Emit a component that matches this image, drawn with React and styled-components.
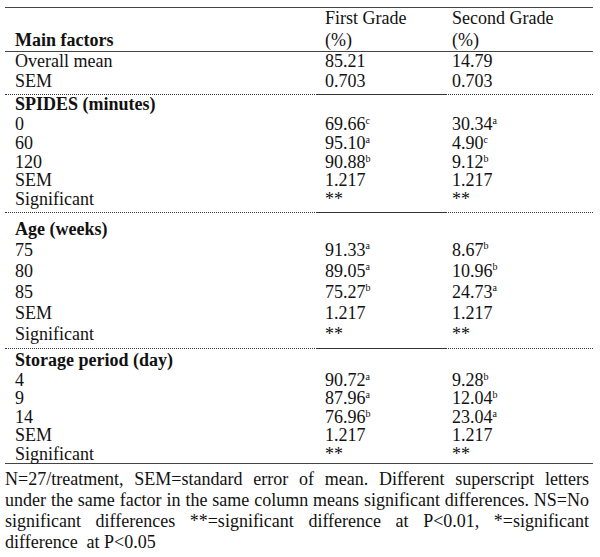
import React from 'react';
import styled, { createGlobalStyle } from 'styled-components';

const GlobalStyle = createGlobalStyle`
  body {
    margin: 0;
    background: #fff;
    color: #111;
    font-family: "Liberation Serif", "Times New Roman", serif;
  }
`;

const Page = styled.div`
  width: 588px;
  padding: 7px 0 0 5px;
`;

const Table = styled.table`
  width: 588px;
  border-collapse: collapse;
  font-size: 18px;
  border-top: 1.5px solid #444;
  border-bottom: 1.5px solid #444;
  table-layout: fixed;
`;

const HeadCell = styled.th`
  text-align: left;
  vertical-align: bottom;
  font-weight: ${p => (p.bold ? 700 : 400)};
  padding: 0 0 0 ${p => p.pad}px;
  line-height: 21.5px;
  border-bottom: 1.5px solid #444;
`;

const Cell = styled.td`
  padding: 0 0 ${p => (p.rule ? 3 : 0)}px ${p => p.pad}px;
  line-height: ${p => p.h}px;
  vertical-align: top;
  white-space: nowrap;
  border-bottom: ${p => (p.rule ? (p.solid ? '1.5px solid #333' : '1.5px dotted #333') : 'none')};
`;

const TitleCell = styled.td`
  padding: ${p => p.top}px 0 1px ${p => p.pad}px;
  line-height: 19px;
  font-weight: 700;
  white-space: nowrap;
`;

const Sup = styled.span`
  display: inline-block;
  font-size: 10px;
  line-height: 10px;
  vertical-align: top;
  margin-top: 1px;
`;

const Note = styled.p`
  margin: 5px 0 0;
  width: 584px;
  font-size: 18px;
  line-height: 21px;
  text-align: justify;
  color: #111;
`;

const pads = [10, 8, 6];

const sections = [
  {
    rowH: 19.5,
    rows: [
      ['Overall mean', '85.21', '14.79'],
      ['SEM', '0.703', '0.703'],
    ],
  },
  {
    title: 'SPIDES (minutes)',
    top: 0,
    rowH: 18.75,
    rows: [
      ['0', ['69.66', 'c'], ['30.34', 'a']],
      ['60', ['95.10', 'a'], ['4.90', 'c']],
      ['120', ['90.88', 'b'], ['9.12', 'b']],
      ['SEM', '1.217', '1.217'],
      ['Significant', '**', '**'],
    ],
  },
  {
    title: 'Age (weeks)',
    top: 7,
    rowH: 21,
    rows: [
      ['75', ['91.33', 'a'], ['8.67', 'b']],
      ['80', ['89.05', 'a'], ['10.96', 'b']],
      ['85', ['75.27', 'b'], ['24.73', 'a']],
      ['SEM', '1.217', '1.217'],
      ['Significant', '**', '**'],
    ],
  },
  {
    title: 'Storage period (day)',
    top: 2,
    rowH: 18.5,
    last: true,
    rows: [
      ['4', ['90.72', 'a'], ['9.28', 'b']],
      ['9', ['87.96', 'a'], ['12.04', 'b']],
      ['14', ['76.96', 'b'], ['23.04', 'a']],
      ['SEM', '1.217', '1.217'],
      ['Significant', '**', '**'],
    ],
  },
];

const Value = ({ v }) =>
  Array.isArray(v) ? (
    <>
      {v[0]}
      <Sup>{v[1]}</Sup>
    </>
  ) : (
    v
  );

export default function App() {
  return (
    <Page>
      <GlobalStyle />
      <Table>
        <colgroup>
          <col style={{ width: 312 }} />
          <col style={{ width: 129 }} />
          <col style={{ width: 147 }} />
        </colgroup>
        <thead>
          <tr>
            <HeadCell bold pad={pads[0]}>Main factors</HeadCell>
            <HeadCell pad={pads[1]}>First Grade<br />(%)</HeadCell>
            <HeadCell pad={pads[2]}>Second Grade<br />(%)</HeadCell>
          </tr>
        </thead>
        <tbody>
          {sections.map((s, si) => (
            <React.Fragment key={si}>
              {s.title && (
                <tr>
                  <TitleCell top={s.top} pad={pads[0]} colSpan={3}>{s.title}</TitleCell>
                </tr>
              )}
              {s.rows.map((r, ri) => {
                const rule = !s.last && ri === s.rows.length - 1;
                return (
                  <tr key={ri}>
                    {r.map((v, ci) => (
                      <Cell key={ci} h={s.rowH} pad={pads[ci]} rule={rule} solid={ci === 1}>
                        <Value v={v} />
                      </Cell>
                    ))}
                  </tr>
                );
              })}
            </React.Fragment>
          ))}
        </tbody>
      </Table>
      <Note>
        N=27/treatment, SEM=standard error of mean. Different superscript letters
        under the same factor in the same column means significant differences. NS=No
        significant differences **=significant difference at P&lt;0.01, *=significant
        difference&nbsp; at P&lt;0.05
      </Note>
    </Page>
  );
}
